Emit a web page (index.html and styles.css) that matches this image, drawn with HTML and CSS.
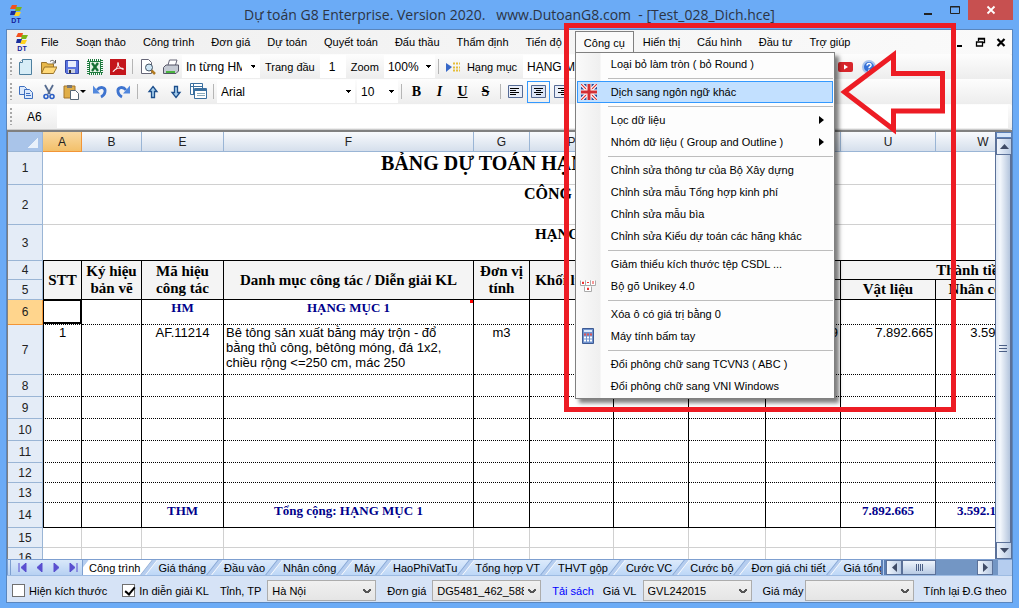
FILE: index.html
```html
<!DOCTYPE html>
<html lang="vi">
<head>
  <meta charset="UTF-8" />
  <meta name="viewport" content="width=device-width, initial-scale=1.0"/>
  <title>Dự toán G8 Enterprise</title>
  <link rel="stylesheet" href="styles.css">
</head>
<body>
  <!-- Shared icons -->
  <svg class="defs" width="0" height="0">
    <symbol id="logo" viewBox="0 0 16 18">
      <path d="M4 0h5L8 4H2z" fill="#f4511e"/><path d="M8 2h6l-2 4H7z" fill="#7cb518"/>
      <path d="M3 6h5l-1 4H2z" fill="#1a2f9c"/><path d="M8 7h5l-2 4H6z" fill="#ffd21f"/>
      <text x="8" y="18" text-anchor="middle" font-size="7" font-weight="bold" fill="#14209a">DT</text>
    </symbol>
  </svg>

  <header class="titlebar">
    <div class="system"><svg class="logo"><use href="#logo"/></svg></div>
    <h1>Dự toán G8 Enterprise. Version 2020. &nbsp; www.DutoanG8.com &nbsp;- [Test_028_Dich.hce]</h1>
    <div class="window-buttons">
      <button aria-label="Minimize"><svg width="10" height="12"><path d="M1 9h8v2H1z" fill="#222"/></svg></button>
      <button aria-label="Maximize"><svg width="12" height="12"><path d="M1.500 2.500h9v7h-9zM1 3h10" fill="none" stroke="#222"/></svg></button>
      <button class="close" aria-label="Close"><svg width="10" height="10"><path d="M1.500 1.500l7 7M8.500 1.500l-7 7" stroke="#fff" stroke-width="1.800"/></svg></button>
    </div>
  </header>

  <div class="window">
    <!-- Menu bar -->
    <nav class="menubar">
      <svg class="logo"><use href="#logo"/></svg>
      <button>File</button>
      <button>Soạn thảo</button>
      <button>Công trình</button>
      <button>Đơn giá</button>
      <button>Dự toán</button>
      <button>Quyết toán</button>
      <button>Đấu thầu</button>
      <button>Thẩm định</button>
      <button>Tiến độ</button>
      <div class="menu-open">
        <button>Công cụ</button>
        <div class="dropdown">
          <button>Loại bỏ làm tròn ( bỏ Round )</button>
          <hr>
          <button class="selected">
            <svg width="16" height="16"><path d="M0 0h16v16H0z" fill="#2b4b9b"/><path d="M0 0l16 16M16 0L0 16" stroke="#fff" stroke-width="3.500"/><path d="M0 0l16 16M16 0L0 16" stroke="#d33" stroke-width="1.200"/><path d="M8 0v16M0 8h16" stroke="#fff" stroke-width="5"/><path d="M8 0v16M0 8h16" stroke="#d32f35" stroke-width="3"/></svg>
            Dịch sang ngôn ngữ khác
          </button>
          <hr>
          <button class="has-sub">Lọc dữ liệu</button>
          <button class="has-sub">Nhóm dữ liệu ( Group and Outline )</button>
          <hr>
          <button>Chỉnh sửa thông tư của Bộ Xây dựng</button>
          <button>Chỉnh sửa mẫu Tổng hợp kinh phí</button>
          <button>Chỉnh sửa mẫu bìa</button>
          <button>Chỉnh sửa Kiểu dự toán các hãng khác</button>
          <hr>
          <button>Giảm thiểu kích thước tệp CSDL ...</button>
          <button>
            <svg width="16" height="16" fill="#fff" stroke="#aaa"><path d="M.5 2.500v5h5v-5M5.500 2.500v5h5v-5M10.500 2.500v5h5v-5M4.500 8.500v5h7v-5"/><path d="M2.500 6V4h1v2M7 4.500h2M13 3v3M7.500 12v-2h1v2" stroke="#e33" fill="none"/></svg>
            Bộ gõ Unikey 4.0
          </button>
          <hr>
          <button>Xóa ô có giá trị bằng 0</button>
          <button>
            <svg width="16" height="16"><path d="M2.500.5h11v15h-11z" fill="#6f93cf" stroke="#3d5a93"/><path d="M4 2h8v2H4z" fill="#dbe8fb"/><path d="M4 6.500h8" stroke="#d55" stroke-width="2" stroke-dasharray="2 1"/><path d="M4 9.500h8M4 12.500h8" stroke="#fff" stroke-width="2" stroke-dasharray="2 1"/></svg>
            Máy tính bấm tay
          </button>
          <hr>
          <button>Đổi phông chữ sang TCVN3 ( ABC )</button>
          <button>Đổi phông chữ sang VNI Windows</button>
        </div>
        <!-- Red frame and arrow pointing at the translate command -->
        <svg class="callout" width="393" height="390" viewBox="0 0 393 390">
          <path d="M2.500 2.500h387v384h-387z"/>
          <path d="M280.500 69L329.500 32V50.500H378.500V88H329.500V106.500z"/>
        </svg>
      </div>
      <button>Hiển thị</button>
      <button>Cấu hình</button>
      <button>Đầu tư</button>
      <button>Trợ giúp</button>
      <div class="mdi-buttons">
        <button aria-label="Minimize document"><svg width="11" height="11"><path d="M3 8h5v2H3z"/></svg></button>
        <button aria-label="Restore document"><svg width="11" height="11"><path d="M3.500 4V1.500h6v4H8M1.500 5h6v4h-6zM3 2h7M1 5h7" fill="none" stroke="#000" stroke-width="1.300"/></svg></button>
        <button aria-label="Close document"><svg width="11" height="11"><path d="M1.500 2l7 7M8.500 2l-7 7" stroke="#000" stroke-width="2.200"/></svg></button>
      </div>
    </nav>

    <!-- Toolbar: file and print -->
    <div class="toolbar">
      <button class="tool" aria-label="New"><svg width="16" height="16"><path d="M4.500.5h9v15h-12v-12z" fill="#d7edf7" stroke="#4d7f9f"/><path d="M1.500 3.500h3v-3" fill="#fff" stroke="#4d7f9f"/></svg></button>
      <button class="tool" aria-label="Open"><svg width="16" height="16"><path d="M.5 14V3.500h5l1 1.500h6v3" fill="#e8b84a" stroke="#9a742b"/><path d="M.5 14.500l3-6.500H16l-3.500 6.500z" fill="#ffd978" stroke="#9a742b"/><path d="M9 2.500c2-2 4-1 5 1M14.500 1v3h-3" fill="none" stroke="#555"/></svg></button>
      <button class="tool" aria-label="Save"><svg width="16" height="16"><path d="M1.500 1.500h13v13h-12l-1-1z" fill="#5b74e0" stroke="#3346a6"/><path d="M4 2h8v6H4z" fill="#e8eefc"/><path d="M4 10h7v4H4z" fill="#c9cfdd"/><path d="M5 11h2v3H5z" fill="#333"/></svg></button>
      <button class="tool" aria-label="Excel"><svg width="16" height="16"><path d="M1 1h14v14H1z" fill="#fff" stroke="#1d7a3c" stroke-width="2" stroke-dasharray="1 1"/><path d="M2.500 2.500h11v11h-11z" fill="#e4f3e6" stroke="#1d7a3c"/><path d="M5 4l6 8M11 4l-6 8" stroke="#167034" stroke-width="2.300"/></svg></button>
      <button class="tool" aria-label="PDF"><svg width="16" height="16"><path d="M0 0h16v16H0z" fill="#c4161c"/><path d="M3 12.500c3-1 5-5 5-9M8 3.500c0 4 2 6 5.500 7M3 12.500c2-3 6-4 10.500-3" fill="none" stroke="#fff"/></svg></button>
      <span class="sep"></span>
      <button class="tool" aria-label="Print preview"><svg width="16" height="16"><path d="M1.500.5h7l3 3v11h-10z" fill="#fff" stroke="#667"/><circle cx="9" cy="8.500" r="3.500" fill="#cfe6f5" stroke="#456"/><path d="M11.500 11.500l3.500 3.500" stroke="#b07a22" stroke-width="2.500"/></svg></button>
      <button class="tool" aria-label="Print"><svg width="16" height="16"><path d="M5 6l1.500-5H14l-1.500 5" fill="#fff" stroke="#667"/><path d="M.5 8.500L3 6h12.500v6L13 14.500H.5z" fill="#c5cad3" stroke="#556"/><path d="M3 12h9v2H3z" fill="#49b33f"/></svg></button>
      <select class="print-range" aria-label="Phạm vi in"><option>In từng HM</option></select>
      <label for="firstPage">Trang đầu</label>
      <input type="text" id="firstPage" class="page" value="1" />
      <label for="zoom">Zoom</label>
      <select id="zoom" class="zoom"><option>100%</option></select>
      <span class="sep"></span>
      <button class="tool" aria-label="Go to"><svg width="16" height="16"><path d="M1 4l6 4-6 5z" fill="#3768c8"/><path d="M8 4.500h7M8 8.500h7M8 11.500h7" stroke="#e5bd3a" stroke-width="2" stroke-dasharray="2 1"/></svg></button>
      <label for="category" class="tight">Hạng mục</label>
      <input type="text" id="category" class="category" value="HẠNG MỤC 1" />
      <div class="toolbar-end">
        <button class="tool" aria-label="YouTube"><svg width="16" height="16"><rect x="0" y="3" width="15" height="10" rx="2" fill="#d8262c"/><path d="M6 5.500l4 2.500-4 2.500z" fill="#fff"/></svg></button>
        <button class="tool" aria-label="Help"><svg width="16" height="16"><circle cx="8" cy="8" r="6" fill="#3471d8" stroke="#a9c4ec" stroke-width="2"/><path d="M6 6.500c0-3 4.500-2.500 4 0-.3 1.200-2 1-2 2.800M8 10.500v1.500" fill="none" stroke="#fff" stroke-width="1.500"/></svg></button>
      </div>
    </div>

    <!-- Toolbar: edit and format -->
    <div class="toolbar">
      <button class="tool" aria-label="Copy"><svg width="16" height="16" fill="#dce9fb" stroke="#3d6fc0"><path d="M1.500 2.500h5l2 2v6h-7z"/><path d="M6.500 5.500h5l3 3v6h-8zM8 9.500h4M8 11.500h5"/></svg></button>
      <button class="tool" aria-label="Cut"><svg width="16" height="16" fill="none"><path d="M4 1l5 9M12 1l-5 9" stroke="#556b8f" stroke-width="1.800"/><circle cx="5" cy="12.500" r="2" stroke="#2b5ec4" stroke-width="1.600"/><circle cx="11" cy="12.500" r="2" stroke="#2b5ec4" stroke-width="1.600"/></svg></button>
      <button class="tool with-arrow" aria-label="Paste"><svg width="16" height="16"><path d="M1 2h11v12H1z" fill="#e0ae48" stroke="#a3742a"/><path d="M4 1h5v3H4z" fill="#777"/><path d="M7.500 6.500h5l3 3v6h-8z" fill="#fff" stroke="#567"/></svg></button>
      <button class="tool" aria-label="Undo"><svg width="16" height="16"><path d="M5 6c3-4 9-3 8 2-.5 2.500-2 4-4 5" fill="none" stroke="#3f74cf" stroke-width="2.800"/><path d="M1 1.500v8h7z" fill="#5288dd"/></svg></button>
      <button class="tool" aria-label="Redo"><svg width="16" height="16"><path d="M11 6C8 2 2 3 3 8c.5 2.500 2 4 4 5" fill="none" stroke="#3f74cf" stroke-width="2.800"/><path d="M15 1.500v8H8z" fill="#5288dd"/></svg></button>
      <span class="sep"></span>
      <button class="tool" aria-label="Up"><svg width="16" height="16"><path d="M8 2.500l4 5H9.500v6h-3v-6H4z" fill="#a8d0ee" stroke="#1e4f8c" stroke-width="1.300"/></svg></button>
      <button class="tool" aria-label="Down"><svg width="16" height="16"><path d="M8 13.500l4-5H9.500v-6h-3v6H4z" fill="#a8d0ee" stroke="#1e4f8c" stroke-width="1.300"/></svg></button>
      <button class="tool" aria-label="Sheets"><svg width="17" height="17" fill="#fff" stroke="#3a6f9f"><path d="M.5.500h12v11H.500zM.500 3.500h12M3.500.500v11"/><path d="M4.500 5.500h12v10h-12z"/><path d="M5 7h11" stroke-width="2"/><path d="M7 10.500h8M7 12.500h8" stroke="#8ab"/></svg></button>
      <span class="sep"></span>
      <select class="font-name" aria-label="Font"><option>Arial</option></select>
      <select class="font-size" aria-label="Cỡ chữ"><option>10</option></select>
      <span class="sep"></span>
      <button class="format"><b>B</b></button>
      <button class="format"><i>I</i></button>
      <button class="format"><u>U</u></button>
      <button class="format"><s>S</s></button>
      <span class="sep"></span>
      <button class="align" aria-label="Left"><svg width="15" height="13"><path d="M.5.500h14v12H.500z" fill="#e9eef8" stroke="#556a94"/><path d="M2 3.500h9M2 5.500h6M2 7.500h9M2 9.500h6" stroke="#000"/></svg></button>
      <button class="align active" aria-label="Center"><svg width="15" height="13"><path d="M.5.500h14v12H.500z" fill="#dce5f6" stroke="#556a94"/><path d="M3 3.500h9M5 5.500h5M3 7.500h9M5 9.500h5" stroke="#000"/></svg></button>
      <button class="align" aria-label="Right"><svg width="15" height="13"><path d="M.5.500h14v12H.500z" fill="#e9eef8" stroke="#556a94"/><path d="M4 3.500h9M7 5.500h6M4 7.500h9M7 9.500h6" stroke="#000"/></svg></button>
    </div>

    <!-- Formula bar -->
    <div class="toolbar formula">
      <label for="formula">A6</label>
      <input type="text" id="formula" />
    </div>

    <!-- Spreadsheet -->
    <div class="sheet">
      <div class="cells">
        <table>
          <colgroup>
            <col class="c-head"><col class="c-a"><col class="c-b"><col class="c-e"><col class="c-f"><col class="c-g"><col class="c-p">
            <col class="c-q"><col class="c-r"><col class="c-q"><col class="c-u"><col class="c-u"><col class="c-x">
          </colgroup>
          <thead>
            <tr class="letters"><th class="corner"></th><th class="current">A</th><th>B</th><th>E</th><th>F</th><th>G</th><th>P</th><th></th><th></th><th></th><th>U</th><th>W</th><th></th></tr>
          </thead>
          <tbody class="heading">
            <tr class="h33"><th>1</th><td colspan="12" class="title">BẢNG DỰ TOÁN HẠNG MỤC</td></tr>
            <tr class="h40"><th>2</th><td colspan="12" class="project">CÔNG TRÌNH</td></tr>
            <tr class="h36"><th>3</th><td colspan="12" class="item">HẠNG MỤC</td></tr>
          </tbody>
          <tbody class="columns">
            <tr class="h19"><th>4</th><td rowspan="2" class="first">STT</td><td rowspan="2">Ký hiệu<br>bản vẽ</td><td rowspan="2">Mã hiệu<br>công tác</td><td rowspan="2">Danh mục công tác / Diễn giải KL</td><td rowspan="2">Đơn vị<br>tính</td><td rowspan="2">Khối lượng</td><td colspan="3"></td><td colspan="3">Thành tiền</td></tr>
            <tr class="h20"><th>5</th><td></td><td></td><td></td><td>Vật liệu</td><td>Nhân công</td><td></td></tr>
          </tbody>
          <tbody class="data">
            <tr class="h25 total"><th class="current">6</th><td class="first cursor"></td><td></td><td>HM</td><td class="note">HẠNG MỤC 1</td><td></td><td></td><td></td><td></td><td></td><td></td><td></td><td></td></tr>
            <tr class="h50"><th>7</th><td class="first">1</td><td></td><td>AF.11214</td><td class="text">Bê tông sản xuất bằng máy trộn - đổ bằng thủ công, bêtông móng, đá 1x2, chiều rộng &lt;=250 cm, mác 250</td><td>m3</td><td></td><td></td><td></td><td class="num">9</td><td class="num">7.892.665</td><td class="num">3.592.100</td><td></td></tr>
            <tr class="h22"><th>8</th><td class="first"></td><td></td><td></td><td></td><td></td><td></td><td></td><td></td><td></td><td></td><td></td><td></td></tr>
            <tr class="h22"><th>9</th><td class="first"></td><td></td><td></td><td></td><td></td><td></td><td></td><td></td><td></td><td></td><td></td><td></td></tr>
            <tr class="h22"><th>10</th><td class="first"></td><td></td><td></td><td></td><td></td><td></td><td></td><td></td><td></td><td></td><td></td><td></td></tr>
            <tr class="h22"><th>11</th><td class="first"></td><td></td><td></td><td></td><td></td><td></td><td></td><td></td><td></td><td></td><td></td><td></td></tr>
            <tr class="h20"><th>12</th><td class="first"></td><td></td><td></td><td></td><td></td><td></td><td></td><td></td><td></td><td></td><td></td><td></td></tr>
            <tr class="h20"><th>13</th><td class="first"></td><td></td><td></td><td></td><td></td><td></td><td></td><td></td><td></td><td></td><td></td><td></td></tr>
            <tr class="h25 total last"><th>14</th><td class="first"></td><td></td><td>THM</td><td>Tổng cộng: HẠNG MỤC 1</td><td></td><td></td><td></td><td></td><td></td><td>7.892.665</td><td>3.592.100</td><td></td></tr>
          </tbody>
          <tbody class="blank">
            <tr class="h20"><th>15</th><td></td><td></td><td></td><td></td><td></td><td></td><td></td><td></td><td></td><td></td><td></td><td></td></tr>
            <tr class="h20"><th>16</th><td></td><td></td><td></td><td></td><td></td><td></td><td></td><td></td><td></td><td></td><td></td><td></td></tr>
          </tbody>
        </table>
      </div>
      <div class="vscroll">
        <span class="split"></span>
        <button aria-label="Scroll up"><svg width="9" height="5"><path d="M0 5l4.500-5L9 5z"/></svg></button>
        <div class="thumb"></div>
        <button aria-label="Scroll down"><svg width="9" height="5"><path d="M0 0h9L4.500 5z"/></svg></button>
      </div>
    </div>

    <!-- Sheet tabs -->
    <div class="tabbar">
      <div class="tab-nav">
        <button aria-label="First"><svg width="9" height="9"><path d="M1 0v9M8 0L3 4.500 8 9z"/></svg></button>
        <button aria-label="Previous"><svg width="9" height="9"><path d="M7 0L2 4.500 7 9z"/></svg></button>
        <button aria-label="Next"><svg width="9" height="9"><path d="M2 0l5 4.500L2 9z"/></svg></button>
        <button aria-label="Last"><svg width="9" height="9"><path d="M8 0v9M1 0l5 4.500L1 9z"/></svg></button>
      </div>
      <div class="tabs">
        <button class="active">Công trình</button>
        <button>Giá tháng</button>
        <button>Đầu vào</button>
        <button>Nhân công</button>
        <button>Máy</button>
        <button>HaoPhiVatTu</button>
        <button>Tổng hợp VT</button>
        <button>THVT gộp</button>
        <button>Cước VC</button>
        <button>Cước bộ</button>
        <button>Đơn giá chi tiết</button>
        <button>Giá tổng hợp</button>
      </div>
      <div class="hscroll">
        <button aria-label="Scroll left"><svg width="5" height="9"><path d="M5 0v9L0 4.500z"/></svg></button>
        <div class="thumb"></div>
        <button aria-label="Scroll right"><svg width="5" height="9"><path d="M0 0v9l5-4.500z"/></svg></button>
      </div>
    </div>

    <!-- Status bar -->
    <footer class="status">
      <label class="check"><input type="checkbox" />Hiện kích thước</label>
      <label class="check"><input type="checkbox" checked />In diễn giải KL</label>
      <label for="province">Tỉnh, TP</label>
      <select id="province"><option>Hà Nội</option></select>
      <label for="price">Đơn giá</label>
      <select id="price"><option>DG5481_462_588</option></select>
      <a href="#">Tải sách</a>
      <label for="material">Giá VL</label>
      <select id="material"><option>GVL242015</option></select>
      <label for="machine">Giá máy</label>
      <select id="machine" class="machine"><option></option></select>
      <span class="recalc">Tính lại Đ.G theo</span>
    </footer>
  </div>
</body>
</html>
```
FILE: styles.css
```css
* {
  box-sizing: border-box;
}
body {
  margin: 0;
  height: 100vh;
  display: flex;
  flex-direction: column;
  padding: 0 6px 5px;
  background: #6babf6;
  font-family: "Liberation Sans", Arial, sans-serif;
  font-size: 11px;
  color: #000;
  overflow: hidden;
}
button, input, select {
  font: inherit;
  color: inherit;
  margin: 0;
  padding: 0;
  border: none;
  background: none;
  border-radius: 0;
}
button {
  display: flex;
  align-items: center;
  justify-content: center;
  white-space: nowrap;
}
label, a, .recalc {
  white-space: nowrap;
}
.defs {
  position: absolute;
}
.logo {
  width: 16px;
  height: 18px;
  flex: none;
}

/* Title bar */
.titlebar {
  display: flex;
  height: 29px;
  flex: none;
}
.system {
  width: 99px;
  padding: 5px 0 0 2px;
}
h1 {
  flex: 1;
  margin: 0;
  font: 14px/30px "Open Sans", "Noto Sans", sans-serif;
  color: #2c3444;
  text-align: center;
  white-space: nowrap;
}
.window-buttons {
  display: flex;
  height: 20px;
}
.window-buttons button {
  width: 27px;
}
.window-buttons .close {
  width: 45px;
  background: #c75050;
}

.window {
  flex: 1;
  min-height: 0;
  display: flex;
  flex-direction: column;
  border: 1px solid #5a86bd;
  background: #f0f0f0;
}

/* Menu bar */
.menubar {
  display: flex;
  align-items: center;
  height: 24px;
  flex: none;
  padding-left: 7px;
  background: linear-gradient(90deg, #efefef, #fafafa);
}
.menubar .logo {
  margin-right: 3px;
}
.menubar > button {
  height: 22px;
  padding: 0 9px 0 8px;
}
.menu-open {
  position: relative;
  margin: 0 1px 0 4px;
}
.menu-open > button {
  height: 22px;
  padding: 0 8px;
  border: 1px solid #808080;
  border-bottom: none;
  background: #fafafa;
}
.dropdown {
  position: absolute;
  top: 21px;
  left: 0;
  z-index: 2;
  width: 260px;
  padding-bottom: 1px;
  border: 1px solid #808080;
  background: linear-gradient(90deg, #fafafa, #efefef 24px, #fdfdfd 25px, #fdfdfd);
  box-shadow: 4px 4px 4px rgba(0, 0, 0, 0.5);
}
.dropdown button {
  position: relative;
  width: 256px;
  height: 22px;
  margin-left: 1px;
  padding-left: 34px;
  justify-content: flex-start;
}
.dropdown button svg {
  position: absolute;
  left: 3px;
}
.dropdown .selected {
  border: 1px solid #3399ff;
  background: #c2e0ff;
  padding-left: 33px;
}
.dropdown hr {
  height: 1px;
  margin: 3px 1px 2px 32px;
  border: none;
  background: #bdbdbd;
}
.has-sub::after {
  content: "";
  margin-left: auto;
  margin-right: 9px;
  border: 4px solid transparent;
  border-left: 5px solid #000;
  border-right: none;
}
.callout {
  position: absolute;
  top: -8px;
  left: -11px;
  z-index: 3;
  fill: none;
  stroke: #ed1c24;
  stroke-width: 5;
  pointer-events: none;
}
.mdi-buttons {
  display: flex;
  gap: 10px;
  margin-left: auto;
  margin-right: 5px;
}

/* Toolbars */
.toolbar {
  display: flex;
  align-items: center;
  height: 25px;
  flex: none;
  padding: 0 4px 0 3px;
  border-radius: 0 3px 3px 0;
  background: linear-gradient(#fdfdfd, #ededed);
}
.toolbar::before {
  content: "";
  width: 2px;
  height: 17px;
  flex: none;
  margin-right: 2px;
  background: repeating-linear-gradient(#a8a8a8 0 2px, transparent 2px 4px);
}
.tool {
  width: 23px;
  height: 22px;
  flex: none;
}
.with-arrow {
  width: 28px;
}
.with-arrow::after {
  content: "";
  margin-left: 1px;
  border: 3px solid transparent;
  border-top-color: #000;
  border-bottom: none;
}
.sep {
  width: 1px;
  height: 15px;
  flex: none;
  margin: 0 3px;
  background: #b5b5b5;
}
.toolbar select, .toolbar input {
  height: 23px;
  background-color: #fff;
}
.toolbar select {
  appearance: none;
  font-size: 12px;
  padding: 0 14px 0 4px;
  background-image: linear-gradient(45deg, transparent 50%, #000 50%), linear-gradient(-45deg, transparent 50%, #000 50%);
  background-image: conic-gradient(from -45deg at 50% 100%, #000 90deg, transparent 0);
  background-position: right 4px top 10px;
  background-size: 6px 3px;
  background-repeat: no-repeat;
}
.toolbar input {
  padding: 0 4px;
  font-size: 12px;
}
.toolbar .print-range {
  width: 78px;
  padding-right: 18px;
}
.toolbar label {
  margin: 0 5px;
}
.toolbar .tight {
  margin: 0 6px 0 2px;
}
.toolbar .page {
  width: 26px;
  padding-left: 9px;
}
.zoom {
  width: 51px;
}
.category {
  width: 120px;
}
.toolbar-end {
  display: flex;
  margin-left: 191px;
}
.font-name {
  width: 138px;
}
.font-size {
  width: 41px;
  margin-left: 2px;
}
.format {
  width: 23px;
  height: 22px;
  font: bold 14px "Liberation Serif", serif;
}
.align {
  width: 23px;
  height: 22px;
}
.align.active {
  border: 1px solid #3399ff;
}
.formula {
  border-bottom: 1px solid #ccc;
  height: 26px;
}
.toolbar.formula label {
  width: 30px;
  margin: 0 0 0 13px;
  font-size: 12px;
}
.formula input {
  flex: 1;
}

/* Spreadsheet */
.sheet {
  flex: 1;
  min-height: 0;
  display: flex;
  border-top: 2px solid #808080;
  border-left: 1px solid #808080;
  background: #fff;
}
.cells {
  flex: 1;
  min-width: 0;
  overflow: hidden;
}
table {
  width: 1095px;
  table-layout: fixed;
  border-collapse: separate;
  border-spacing: 0;
}
.c-head { width: 35px; }
.c-a { width: 39px; }
.c-b { width: 60px; }
.c-e { width: 82px; }
.c-f { width: 250px; }
.c-g { width: 56px; }
.c-p { width: 84px; }
.c-q { width: 75px; }
.c-r { width: 77px; }
.c-u { width: 95px; }
.c-x { width: 72px; }
.h19 { height: 19px; }
.h20 { height: 20px; }
.h22 { height: 22px; }
.h25 { height: 25px; }
.h33 { height: 33px; }
.h36 { height: 36px; }
.h40 { height: 40px; }
.h50 { height: 50px; }
th, td {
  padding: 0;
}
th {
  font-weight: normal;
  font-size: 12px;
  line-height: 14px;
  color: #222;
  border-right: 1px solid #9ab5d5;
  border-bottom: 1px solid #9ab5d5;
  background: #e4ecf7;
}
.letters {
  height: 20px;
}
.letters th {
  background: linear-gradient(#f8fafd, #d5dfec);
}
.letters .corner {
  background: linear-gradient(135deg, transparent 50%, #e9f1fb 50%) right 4px bottom 3px / 11px 11px no-repeat, #a9c4e9;
}
th.current, .letters th.current {
  border-color: #f29536;
  background: #ffd58d;
}
.letters th.current {
  background: linear-gradient(#f9d9a2, #f3c06a);
}
td {
  font-size: 13px;
  line-height: 15px;
  text-align: center;
  vertical-align: top;
}
.heading td {
  border-bottom: 1px solid #d0d0d0;
  font-family: "Liberation Serif", "Times New Roman", serif;
  font-weight: bold;
  text-align: left;
}
.heading .title {
  padding-left: 338px;
  font-size: 20px;
  line-height: 22px;
}
.heading .project {
  padding-left: 481px;
  font-size: 16px;
  line-height: 18px;
}
.heading .item {
  padding-left: 492px;
  border-bottom-color: #000;
  font-size: 15px;
  line-height: 18px;
}
.columns td {
  border-right: 1px solid #000;
  border-bottom: 1px solid #000;
  background: #f4f4f4;
  font-family: "Liberation Serif", "Times New Roman", serif;
  font-size: 15px;
  font-weight: bold;
  line-height: 17px;
  vertical-align: middle;
  white-space: nowrap;
}
.data td {
  border-right: 1px solid #000;
  border-bottom: 1px dotted #000;
}
.columns td.first, .data td.first {
  border-left: 1px solid #000;
}
.data .last td {
  border-bottom: 1px solid #000;
}
.total td {
  font-family: "Liberation Serif", "Times New Roman", serif;
  font-weight: bold;
  color: #00008b;
}
.data .text {
  text-align: left;
  padding: 0 12px 0 2px;
}
.data .num {
  text-align: right;
  padding-right: 2px;
}
.data .cursor {
  box-shadow: inset -1px -2px #000, inset 0 1px #000;
}
.note {
  background: linear-gradient(#f00, #f00) right top / 3px 3px no-repeat;
}
.blank td {
  border-right: 1px solid #d0d0d0;
  border-bottom: 1px solid #d0d0d0;
}

/* Scrollbars */
.vscroll {
  width: 17px;
  flex: none;
  display: flex;
  flex-direction: column;
  border-left: 1px solid #5b7199;
}
.vscroll .split {
  height: 6px;
  border: 1px solid #5b7fb5;
  background: #d6e6fa;
}
.vscroll button, .hscroll button {
  width: 16px;
  height: 17px;
  flex: none;
  border: 1px solid #5b7199;
  background: linear-gradient(90deg, #f0f5fc, #b9cbe4);
  fill: #3f4b66;
}
.vscroll .thumb {
  flex: 1;
  background:
    repeating-linear-gradient(#4b5f86 0 1px, transparent 1px 3px) center / 8px 7px no-repeat,
    linear-gradient(90deg, #e0e9f5, #f3f7fc 30%, #b4c5dd);
  border-right: 2px solid #5b7199;
}

/* Sheet tabs */
.tabbar {
  display: flex;
  height: 17px;
  flex: none;
  border-top: 1px solid #7d9fd0;
  border-bottom: 1px solid #9dbbe2;
  background: #b5cdef;
}
.tab-nav {
  display: flex;
  flex: none;
  width: 76px;
  padding-left: 3px;
  border-left: 4px double #7d9fd0;
  border-right: 1px solid #7d9fd0;
  background: linear-gradient(#d9e8fa, #b7d1f2);
  fill: #5a4fcf;
  stroke: #5a4fcf;
}
.tab-nav button {
  width: 17px;
}
.tabs {
  flex: 1;
  min-width: 0;
  display: flex;
  overflow: hidden;
}
.tabs button {
  position: relative;
  z-index: 0;
  flex: none;
  padding: 0 11px 0 7px;
}
/* slanted sheet behind the caption */
.tabs button::before {
  content: "";
  position: absolute;
  z-index: -1;
  inset: 0 4px 0 0;
  transform: skewX(-38deg);
  border-left: 1px solid #fff;
  border-right: 1px solid #86a6d3;
  background: linear-gradient(#dceafb, #bdd7f7);
}
.tabs .active::before {
  background: #fff;
}
.tabs .active {
  padding-left: 6px;
}
.hscroll {
  display: flex;
  flex: none;
  width: 131px;
  padding-right: 19px;
  border-left: 5px double #5b7fb5;
  background: linear-gradient(#7396c4, #7396c4) left / 112px 100% no-repeat;
}
.hscroll button {
  height: 15px;
}
.hscroll .thumb {
  width: 34px;
  border: 1px solid #5b7199;
  margin-right: auto;
  background:
    repeating-linear-gradient(90deg, #4b5f86 0 1px, transparent 1px 2px) center / 7px 7px no-repeat,
    linear-gradient(#eef4fc, #b9cbe4);
}

/* Status bar */
.status {
  display: flex;
  align-items: center;
  height: 26px;
  flex: none;
  padding: 3px 0 0 5px;
  background: #d6e3f6;
  overflow: hidden;
}
.check {
  display: flex;
  align-items: center;
  gap: 4px;
  margin-right: 15px;
}
.check + label:not(.check) {
  margin-left: -4px;
}
.check input {
  appearance: none;
  width: 13px;
  height: 13px;
  border: 1px solid #707070;
  background: #fff;
}
.check input:checked::before {
  content: "";
  display: block;
  width: 4px;
  height: 8px;
  margin-left: 4px;
  border: solid #000;
  border-width: 0 2px 2px 0;
  transform: rotate(40deg);
}
.status select {
  appearance: none;
  width: 109px;
  height: 21px;
  margin: 0 11px 0 6px;
  padding: 0 16px 0 4px;
  border: 1px solid #acacac;
  background:
    linear-gradient(45deg, transparent 36%, #555 36% 64%, transparent 64%) right 8px center / 4px 4px no-repeat,
    linear-gradient(-45deg, transparent 36%, #555 36% 64%, transparent 64%) right 4px center / 4px 4px no-repeat,
    linear-gradient(#f0f0f0, #e5e5e5);
}
.status .machine {
  margin: 0 9px 0 2px;
}
.status a {
  margin-right: 9px;
  color: #00f;
  text-decoration: none;
}
```
